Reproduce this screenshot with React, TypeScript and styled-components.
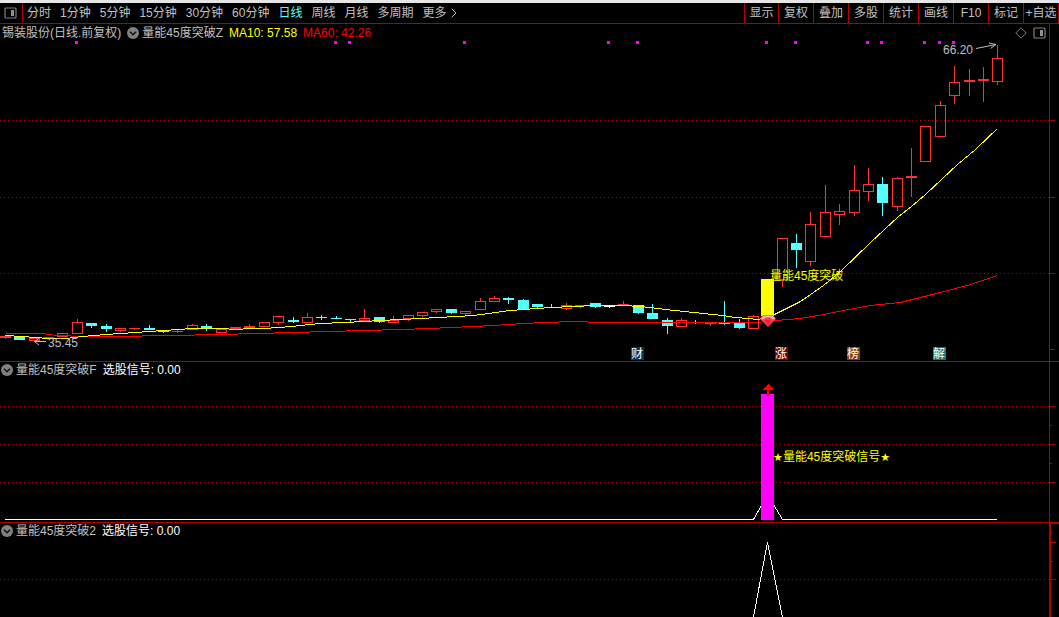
import React from "react";
import styled, { createGlobalStyle } from "styled-components";

const RED = "#b00000";
const UP = "#ff3232";
const DOWN = "#54ffff";
const FONT = '"Liberation Sans", "Noto Sans CJK SC", sans-serif';

const GlobalStyle = createGlobalStyle`
  *, *::before, *::after { box-sizing: border-box; }
  body { margin: 0; background: #000; overflow: hidden; }
`;

const Page = styled.main`
  display: flex;
  flex-direction: column;
  min-height: 100vh;
  border-top: 3px solid #e6e6e6;
  background: #000;
  color: #c0c0c0;
  font: 12px/16px ${FONT};
`;

const Toolbar = styled.header`
  display: flex;
  align-items: stretch;
  height: 21px;
  border-bottom: 1px solid ${RED};
`;

const PlainButton = styled.button`
  display: flex;
  align-items: center;
  justify-content: center;
  padding: 0;
  border: 0;
  background: none;
  color: inherit;
  font: inherit;
  white-space: nowrap;
  cursor: pointer;
`;

const LayoutButton = styled(PlainButton)`
  width: 23px;
  padding-right: 2px;
  border-right: 1px solid ${RED};
`;

const Periods = styled.nav`
  display: flex;
  flex: 1;
  gap: 9px;
  padding-left: 4px;
`;

const PeriodButton = styled(PlainButton)<{ $active?: boolean }>`
  gap: 4px;
  color: ${(p) => (p.$active ? DOWN : "inherit")};
`;

const Tools = styled.div`
  display: flex;
  border-right: 1px solid ${RED};
`;

const ToolButton = styled(PlainButton)`
  width: 35px;
  border-left: 1px solid ${RED};
  &:first-child { width: 34px; }
`;

const Pane = styled.section<{ $grow?: boolean }>`
  position: relative;
  display: flex;
  flex: ${(p) => (p.$grow ? "1 0 auto" : "none")};
  border-bottom: ${(p) => (p.$grow ? "0" : `1px solid ${RED}`)};
`;

const PaneHeader = styled.div<{ $main?: boolean }>`
  position: absolute;
  top: 0;
  left: 0;
  right: 10px;
  display: flex;
  align-items: center;
  gap: 6px;
  height: ${(p) => (p.$main ? 18 : 16)}px;
  padding: 0 3px 0 ${(p) => (p.$main ? 2 : 1)}px;
  white-space: nowrap;
`;

const Indicator = styled.div`
  display: flex;
  align-items: center;
  gap: 3px;
`;

const Reading = styled.span<{ $color: string }>`
  color: ${(p) => p.$color};
`;

const PaneTools = styled.div`
  display: flex;
  align-items: center;
  gap: 6px;
  margin-left: auto;
`;

const Plot = styled.svg`
  flex: 1;
  min-width: 0;
  display: block;
  font: 12px ${FONT};
`;

const Axis = styled.svg<{ $heavy?: boolean }>`
  flex: none;
  width: 10px;
  border-left: ${(p) => (p.$heavy ? 2 : 1)}px solid ${RED};
  border-top: ${(p) => (p.$heavy ? `1px solid ${RED}` : "0")};
`;

type Kind = "hollow" | "up" | "down" | "flat";
// centre x, kind, body top, body bottom, wick top, wick bottom
type Candle = [number, Kind, number, number, number, number];

const candles: Candle[] = [
  [5, "up", 336, 338, 336, 339],
  [19, "down", 337, 340, 337, 340],
  [34, "hollow", 338, 341, 338, 341],
  [48, "up", 337, 338, 337, 338],
  [62, "hollow", 333, 337, 333, 337],
  [77, "hollow", 322, 334, 319, 334],
  [91, "down", 323, 326, 323, 328],
  [106, "down", 326, 329, 324, 332],
  [120, "hollow", 328, 331, 328, 332],
  [134, "up", 328, 329, 328, 330],
  [149, "down", 328, 330, 325, 330],
  [163, "down", 331, 332, 331, 333],
  [177, "up", 331, 332, 330, 333],
  [192, "hollow", 325, 330, 324, 330],
  [206, "down", 326, 328, 324, 331],
  [221, "hollow", 329, 333, 329, 333],
  [235, "up", 327, 329, 327, 330],
  [249, "up", 326, 328, 324, 328],
  [264, "hollow", 322, 327, 322, 327],
  [278, "hollow", 316, 323, 316, 325],
  [293, "down", 320, 322, 317, 323],
  [307, "hollow", 317, 323, 313, 323],
  [321, "down", 317, 318, 315, 320],
  [336, "down", 318, 319, 316, 319],
  [350, "down", 319, 320, 319, 322],
  [364, "hollow", 318, 321, 309, 321],
  [379, "down", 317, 322, 317, 323],
  [393, "hollow", 320, 323, 316, 323],
  [408, "hollow", 315, 319, 315, 321],
  [422, "hollow", 312, 316, 312, 317],
  [436, "hollow", 309, 312, 309, 313],
  [451, "down", 309, 313, 309, 314],
  [465, "hollow", 311, 314, 311, 316],
  [480, "hollow", 301, 310, 298, 310],
  [494, "hollow", 298, 302, 296, 302],
  [508, "down", 298, 300, 297, 304],
  [523, "down", 300, 310, 299, 310],
  [537, "down", 304, 307, 304, 309],
  [551, "down", 307, 308, 304, 308],
  [566, "hollow", 305, 309, 303, 310],
  [580, "up", 305, 306, 305, 308],
  [595, "down", 303, 307, 303, 308],
  [609, "flat", 306, 307, 306, 308],
  [623, "up", 304, 305, 301, 305],
  [638, "down", 305, 313, 305, 314],
  [652, "down", 313, 319, 304, 319],
  [667, "down", 320, 326, 318, 334],
  [681, "hollow", 320, 327, 318, 327],
  [695, "down", 322, 323, 320, 324],
  [710, "up", 323, 324, 323, 326],
  [724, "down", 323, 324, 301, 325],
  [739, "down", 323, 328, 319, 329],
  [753, "hollow", 316, 329, 315, 329],
  [782, "hollow", 238, 280, 238, 287],
  [796, "down", 243, 250, 234, 268],
  [810, "hollow", 224, 262, 212, 266],
  [825, "hollow", 212, 237, 185, 237],
  [839, "hollow", 211, 215, 204, 225],
  [854, "hollow", 190, 213, 165, 216],
  [868, "hollow", 184, 192, 168, 201],
  [882, "down", 184, 203, 177, 216],
  [897, "hollow", 178, 207, 177, 211],
  [911, "up", 176, 178, 148, 197],
  [925, "hollow", 126, 162, 126, 162],
  [940, "hollow", 105, 137, 101, 137],
  [954, "hollow", 82, 96, 66, 104],
  [969, "up", 80, 82, 69, 96],
  [983, "up", 79, 81, 67, 102],
  [997, "hollow", 58, 82, 45, 85],
];

const ma10 =
  "5,335 22,336 34,337 48,338 66,338 82,336 94,335 106,334 120,333 135,332 149,331 163,330 178,329 192,328 221,328 235,329 250,328 264,328 278,327 291,326 300,325 309,324 321,323 343,322 364,321 379,320 400,319 422,318 436,317 457,316 473,315 481,314 488,313 495,312 502,311 510,310 523,309 537,308 551,307 573,306 595,305 624,305 638,306 650,307 665,309 684,311 703,313 722,315 734,317 748,318 757,319 767,317 774,314 800,301 823,285 840,271 870,242 898,216 911,206 925,194 957,164 975,149 997,128";

const ma60 =
  "5,333 42,333 56,335 84,336 113,336 170,335 220,334 256,333 292,332 328,331 364,330 400,329 429,328 451,327 472,326 494,325 508,324 523,323 544,322 573,321 602,322 757,322 775,320 800,318 823,314 843,310 870,305 900,302 920,297 940,292 970,284 997,275";

const markers = [75, 334, 348, 463, 607, 636, 765, 794, 866, 880, 923, 938, 952];

const badges = [
  { x: 631, text: "财", fill: "#003468" },
  { x: 775, text: "涨", fill: "#800000" },
  { x: 847, text: "榜", fill: "#804000" },
  { x: 933, text: "解", fill: "#008080" },
];

function CandleMark({ candle }: { candle: Candle }) {
  const [x, kind, top, bottom, high, low] = candle;
  const color = kind === "down" ? DOWN : kind === "flat" ? "#fff" : UP;
  return (
    <g fill={color}>
      {high < top && <rect x={x} y={high} width={1} height={top - high} />}
      {low > bottom && <rect x={x} y={bottom} width={1} height={low - bottom} />}
      {kind === "hollow" ? (
        <rect x={x - 4.5} y={top + 0.5} width={10} height={bottom - top - 1} fill="none" stroke={color} />
      ) : (
        <rect x={x - 5} y={top} width={11} height={bottom - top} />
      )}
    </g>
  );
}

function GridLines({ rows }: { rows: number[] }) {
  return (
    <g stroke={RED} strokeDasharray="1 3">
      {rows.map((y) => (
        <line key={y} x1={0} x2="100%" y1={y + 0.5} y2={y + 0.5} />
      ))}
    </g>
  );
}

function Ticks({ long, short = [] }: { long: number[]; short?: number[] }) {
  return (
    <g fill={RED}>
      {long.map((y) => <rect key={y} y={y} width={5} height={1} />)}
      {short.map((y) => <rect key={y} y={y} width={2} height={1} />)}
    </g>
  );
}

function PanelIcon() {
  return (
    <svg width="13" height="12" viewBox="0 0 13 12" aria-hidden="true">
      <rect x="1" y="1" width="11" height="10" rx="1" fill="none" stroke="#808080" strokeWidth="1.2" />
      <rect x="7" y="3" width="3" height="6" fill="#909090" />
    </svg>
  );
}

function DiamondIcon() {
  return (
    <svg width="12" height="12" viewBox="0 0 12 12" aria-hidden="true">
      <path d="M6 .8 11.2 6 6 11.2 .8 6Z" fill="none" stroke="#808080" />
    </svg>
  );
}

function ToggleIcon() {
  return (
    <svg width="12" height="12" viewBox="0 0 12 12" aria-hidden="true">
      <circle cx="6" cy="6" r="6" fill="#808080" />
      <path d="M3 4.8 6 7.8 9 4.8" fill="none" stroke="#111" strokeWidth="1.5" />
    </svg>
  );
}

function ChevronRight() {
  return (
    <svg width="6" height="10" viewBox="0 0 6 10" aria-hidden="true">
      <path d="M.8.8 5 5 .8 9.2" fill="none" stroke="#c0c0c0" />
    </svg>
  );
}

function SignalHeader({ name }: { name: string }) {
  return (
    <PaneHeader>
      <Indicator>
        <PlainButton aria-label="指标菜单"><ToggleIcon /></PlainButton>
        <span>{name}</span>
      </Indicator>
      <Reading $color="#fff">选股信号: 0.00</Reading>
    </PaneHeader>
  );
}

const periods = ["分时", "1分钟", "5分钟", "15分钟", "30分钟", "60分钟", "日线", "周线", "月线", "多周期"];
const tools = ["显示", "复权", "叠加", "多股", "统计", "画线", "F10", "标记", "+自选"];

export default function App() {
  return (
    <>
      <GlobalStyle />
      <Page>
        <Toolbar>
          <LayoutButton aria-label="布局"><PanelIcon /></LayoutButton>
          <Periods>
            {periods.map((p) => (
              <PeriodButton key={p} $active={p === "日线"}>{p}</PeriodButton>
            ))}
            <PeriodButton>更多<ChevronRight /></PeriodButton>
          </Periods>
          <Tools>
            {tools.map((t) => <ToolButton key={t}>{t}</ToolButton>)}
          </Tools>
        </Toolbar>

        <Pane>
          <Plot height={337} shapeRendering="crispEdges">
            <g transform="translate(0 -24)">
              <GridLines rows={[120, 197, 273]} />
              {markers.map((x) => <rect key={x} x={x} y={41} width={3} height={3} fill="#f0f" />)}
              {candles.map((c) => <CandleMark key={c[0]} candle={c} />)}
              <rect x={761} y={279} width={13} height={37} fill="#ff0" />
              <g fill="none" transform="translate(0.5 0.5)">
                <polyline points={ma60} stroke="#f00" />
                <polyline points={ma10} stroke="#ff0" />
              </g>
              <g shapeRendering="auto">
                <path d="M763 315h10l3 4-8 8-8-8z" fill="#f04050" />
                <path d="M760.500 319l3-3.500h9l3 3.500-3 .5-2-2h-5l-2 2z" fill="#ffb0b0" />
                <path d="M765 320h6l-3 6z" fill="#ff1830" />
                <path d="M46 341.500H34.500M39 338.500l-4.500 3 4.500 3.500M976 48.500l20-4M989 43l7 1.500-5.500 4" fill="none" stroke="#c0c0c0" />
              </g>
              <g fill="#c0c0c0">
                <text x={48} y={347}>35.45</text>
                <text x={943} y={54}>66.20</text>
              </g>
              <text x={770} y={280} fill="#ff0">量能45度突破</text>
              {badges.map((b) => (
                <g key={b.text}>
                  <rect x={b.x} y={347} width={13} height={13} fill={b.fill} />
                  <text x={b.x} y={358} fill="#fff">{b.text}</text>
                </g>
              ))}
            </g>
          </Plot>
          <Axis height={337} shapeRendering="crispEdges">
            <Ticks long={[96, 173, 249, 325]} />
          </Axis>
          <PaneHeader $main>
            <span>锡装股份(日线.前复权)</span>
            <Indicator>
              <PlainButton aria-label="指标菜单"><ToggleIcon /></PlainButton>
              <span>量能45度突破Z</span>
            </Indicator>
            <Reading $color="#ff0">MA10: 57.58</Reading>
            <Reading $color="#f00">MA60: 42.26</Reading>
            <PaneTools>
              <PlainButton aria-label="标记"><DiamondIcon /></PlainButton>
              <PlainButton aria-label="侧栏"><PanelIcon /></PlainButton>
            </PaneTools>
          </PaneHeader>
        </Pane>

        <Pane>
          <Plot height={160} shapeRendering="crispEdges">
            <GridLines rows={[44, 82, 120]} />
            <polyline points="5,157.500 753.500,157.500 767.500,132.500 782.500,157.500 997,157.500" fill="none" stroke="#fff" />
            <rect x={761} y={32} width={13} height={126} fill="#f0f" />
            <path d="M768 22l5 5v1h-4v6h-2v-6h-4v-1z" fill="#f00" />
            <text x={773} y={99} fill="#ff0">
              <tspan fontSize={11} fontFamily="DejaVu Sans">★</tspan>
              量能45度突破信号
              <tspan fontSize={11} fontFamily="DejaVu Sans">★</tspan>
            </text>
          </Plot>
          <Axis height={160} shapeRendering="crispEdges">
            <Ticks long={[44, 82, 120]} short={[63, 101]} />
          </Axis>
          <SignalHeader name="量能45度突破F" />
        </Pane>

        <Pane $grow>
          <Plot height={94} shapeRendering="crispEdges">
            <GridLines rows={[56]} />
            <polyline points="753.500,94 767.500,19 782.500,94" fill="none" stroke="#fff" />
          </Plot>
          <Axis $heavy height={94} shapeRendering="crispEdges">
            <Ticks long={[18, 55]} short={[37]} />
          </Axis>
          <SignalHeader name="量能45度突破2" />
        </Pane>
      </Page>
    </>
  );
}
